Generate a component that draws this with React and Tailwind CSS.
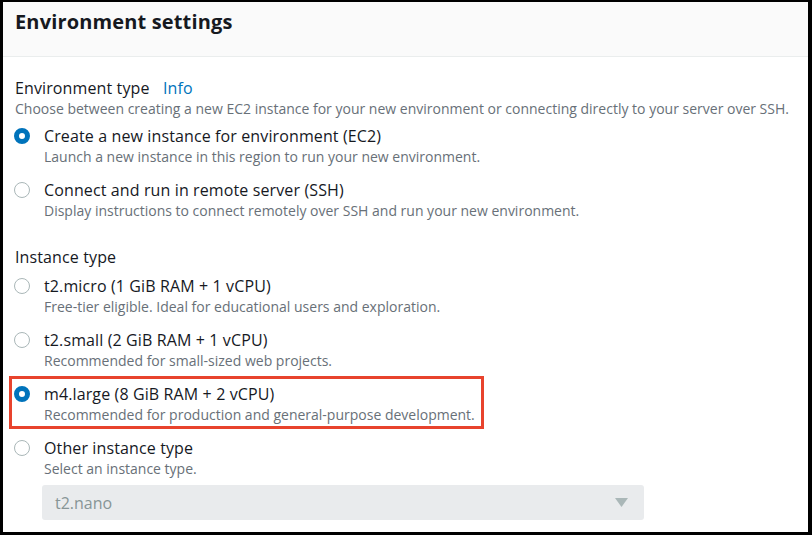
const FONT = { fontFamily: '"Open Sans", "Noto Sans", Arial, sans-serif' }

const ENV_OPTIONS = [
  {
    id: 'ec2',
    label: 'Create a new instance for environment (EC2)',
    desc: 'Launch a new instance in this region to run your new environment.',
    checked: true,
  },
  {
    id: 'ssh',
    label: 'Connect and run in remote server (SSH)',
    desc: 'Display instructions to connect remotely over SSH and run your new environment.',
  },
]

const INSTANCE_OPTIONS = [
  {
    id: 't2.micro',
    label: 't2.micro (1 GiB RAM + 1 vCPU)',
    desc: 'Free-tier eligible. Ideal for educational users and exploration.',
  },
  {
    id: 't2.small',
    label: 't2.small (2 GiB RAM + 1 vCPU)',
    desc: 'Recommended for small-sized web projects.',
  },
  {
    id: 'm4.large',
    label: 'm4.large (8 GiB RAM + 2 vCPU)',
    desc: 'Recommended for production and general-purpose development.',
    checked: true,
    highlight: true,
  },
  {
    id: 'other',
    label: 'Other instance type',
    desc: 'Select an instance type.',
  },
]

function Radio({ checked }) {
  return checked ? (
    <span className="w-4 h-4 rounded-full border-[5px] border-[#0073bb] bg-white flex-shrink-0" />
  ) : (
    <span className="w-4 h-4 rounded-full border border-[#aab7b8] bg-white flex-shrink-0" />
  )
}

function Option({ option }) {
  return (
    <div className="relative">
      {option.highlight && (
        <span className="absolute -top-[7px] -left-[5px] w-[475px] h-[53px] border-[3px] border-[#e8432d] pointer-events-none" />
      )}
      <div className="flex items-center gap-[14px] h-[22px]">
        <Radio checked={option.checked} />
        <span className="text-[16px] leading-[22px] tracking-[0.12px] text-[#16191f]">{option.label}</span>
      </div>
      <p className="pl-[30px] text-[14px] leading-[20px] text-[#687078]">{option.desc}</p>
    </div>
  )
}

export default function App() {
  return (
    <div
      style={FONT}
      className="w-[812px] h-[535px] bg-white border-t-2 border-l-[3px] border-r-[4px] border-b-[3px] border-black overflow-hidden"
    >
      {/* Header */}
      <div className="h-[55px] bg-[#fafafa] border-b border-[#eaeded] px-[12px] pt-[6px]">
        <h2 className="text-[20px] leading-[28px] font-bold tracking-[0.15px] text-[#16191f]">Environment settings</h2>
      </div>

      {/* Body */}
      <div className="pl-[11px] pr-[12px]">
        <div className="mt-[20px] ml-[1px] text-[16px] leading-[22px] tracking-[0.12px] text-[#16191f]">
          Environment type <span className="ml-[9px] text-[#0073bb]">Info</span>
        </div>
        <p className="ml-[1px] text-[14px] leading-[20px] text-[#687078]">
          Choose between creating a new EC2 instance for your new environment or connecting directly to your server over SSH.
        </p>

        <div className="mt-[6px] flex flex-col gap-[12px]">
          {ENV_OPTIONS.map((o) => (
            <Option key={o.id} option={o} />
          ))}
        </div>

        <div className="mt-[25px] ml-[1px] text-[16px] leading-[22px] tracking-[0.12px] text-[#16191f]">Instance type</div>

        <div className="mt-[7px] flex flex-col gap-[12px]">
          {INSTANCE_OPTIONS.map((o) => (
            <Option key={o.id} option={o} />
          ))}
        </div>

        {/* Select */}
        <div className="mt-[6px] ml-[28px] w-[602px] h-[35px] rounded-[3px] bg-[#e9ebed] flex items-center justify-between pl-[13px] pr-[16px]">
          <span className="text-[16px] text-[#879596]">t2.nano</span>
          <svg width="13" height="9" viewBox="0 0 13 9">
            <path d="M0 0 H13 L6.5 9 Z" fill="#aab7b8" />
          </svg>
        </div>
      </div>
    </div>
  )
}
